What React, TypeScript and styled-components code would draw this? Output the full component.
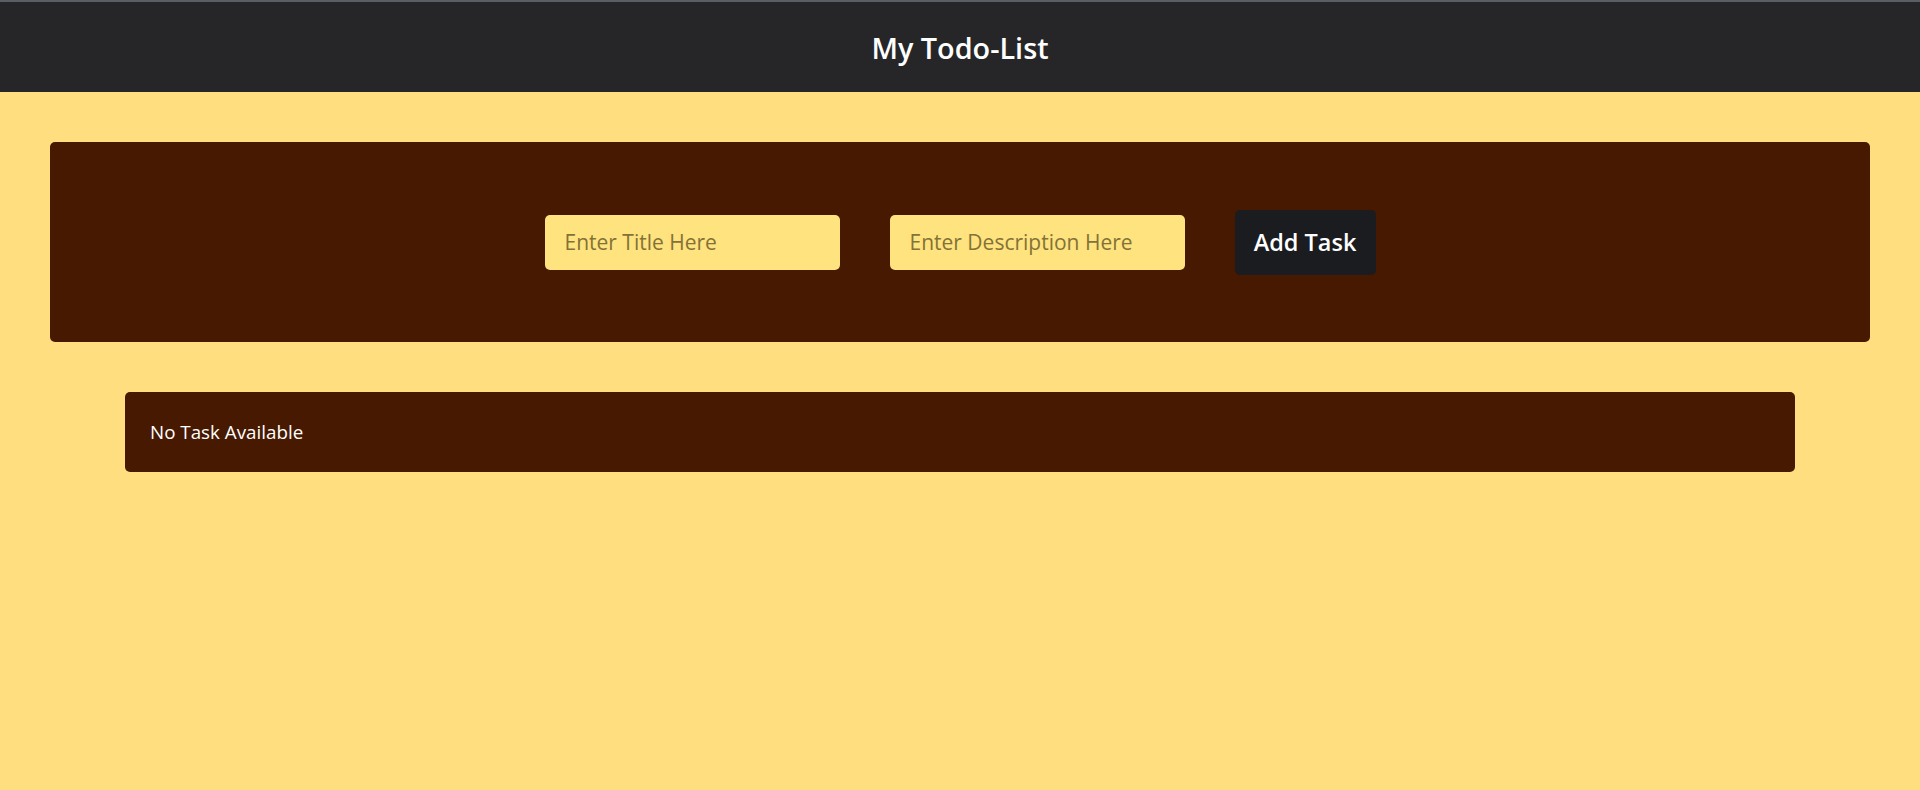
import styled, { createGlobalStyle } from "styled-components";
import { useState } from "react";

const GlobalStyle = createGlobalStyle`
  body {
    margin: 0;
    background: #ffde80;
    font-family: "Open Sans", "Noto Sans", sans-serif;
  }
`;

interface Task {
  title: string;
  description: string;
}

const App = () => {
  const [title, setTitle] = useState("");
  const [description, setDescription] = useState("");
  const [tasks, setTasks] = useState<Task[]>([]);

  const handleAddTask = () => {
    if (!title.trim()) return;
    setTasks([...tasks, { title, description }]);
    setTitle("");
    setDescription("");
  };

  return (
    <>
      <GlobalStyle />
      <S.Header>
        <S.Title>My Todo-List</S.Title>
      </S.Header>
      <S.Main>
        <S.FormCard>
          <S.Input
            placeholder="Enter Title Here"
            value={title}
            onChange={(e) => setTitle(e.target.value)}
          />
          <S.Input
            placeholder="Enter Description Here"
            value={description}
            onChange={(e) => setDescription(e.target.value)}
          />
          <S.AddButton onClick={handleAddTask}>Add Task</S.AddButton>
        </S.FormCard>
        <S.TaskList>
          {tasks.length === 0 ? (
            <S.TaskCard>No Task Available</S.TaskCard>
          ) : (
            tasks.map((task, i) => (
              <S.TaskCard key={i}>
                {task.title} - {task.description}
              </S.TaskCard>
            ))
          )}
        </S.TaskList>
      </S.Main>
    </>
  );
};

export default App;

const S = {
  Header: styled.header`
    display: flex;
    align-items: center;
    justify-content: center;
    height: 90px;
    background: #262628;
    border-top: 2px solid #5b5e64;
  `,

  Title: styled.h1`
    margin: 0;
    color: #ffffff;
    font-size: 28.8px;
    font-weight: 600;
  `,

  Main: styled.main`
    display: flex;
    flex-direction: column;
    gap: 50px;
    padding: 50px 50px 0;
  `,

  FormCard: styled.div`
    display: flex;
    align-items: center;
    justify-content: center;
    gap: 50px;
    height: 200px;
    background: #461900;
    border-radius: 5px;
  `,

  Input: styled.input`
    box-sizing: border-box;
    width: 295px;
    height: 55px;
    padding: 0 20px;
    border: none;
    border-radius: 5px;
    background: #ffe37e;
    color: #3a3000;
    font-family: inherit;
    font-size: 21px;
    outline: none;

    &::placeholder {
      color: #827238;
    }
  `,

  AddButton: styled.button`
    box-sizing: border-box;
    width: 141px;
    height: 65px;
    border: none;
    border-radius: 5px;
    background: #1b1c1f;
    color: #ffffff;
    font-family: inherit;
    font-size: 23.5px;
    font-weight: 600;
    cursor: pointer;
  `,

  TaskList: styled.div`
    display: flex;
    flex-direction: column;
    gap: 20px;
    margin: 0 75px;
  `,

  TaskCard: styled.div`
    display: flex;
    align-items: center;
    height: 80px;
    box-sizing: border-box;
    padding: 0 25px;
    background: #461900;
    border-radius: 5px;
    color: #ffffff;
    font-size: 18.8px;
  `,
};
